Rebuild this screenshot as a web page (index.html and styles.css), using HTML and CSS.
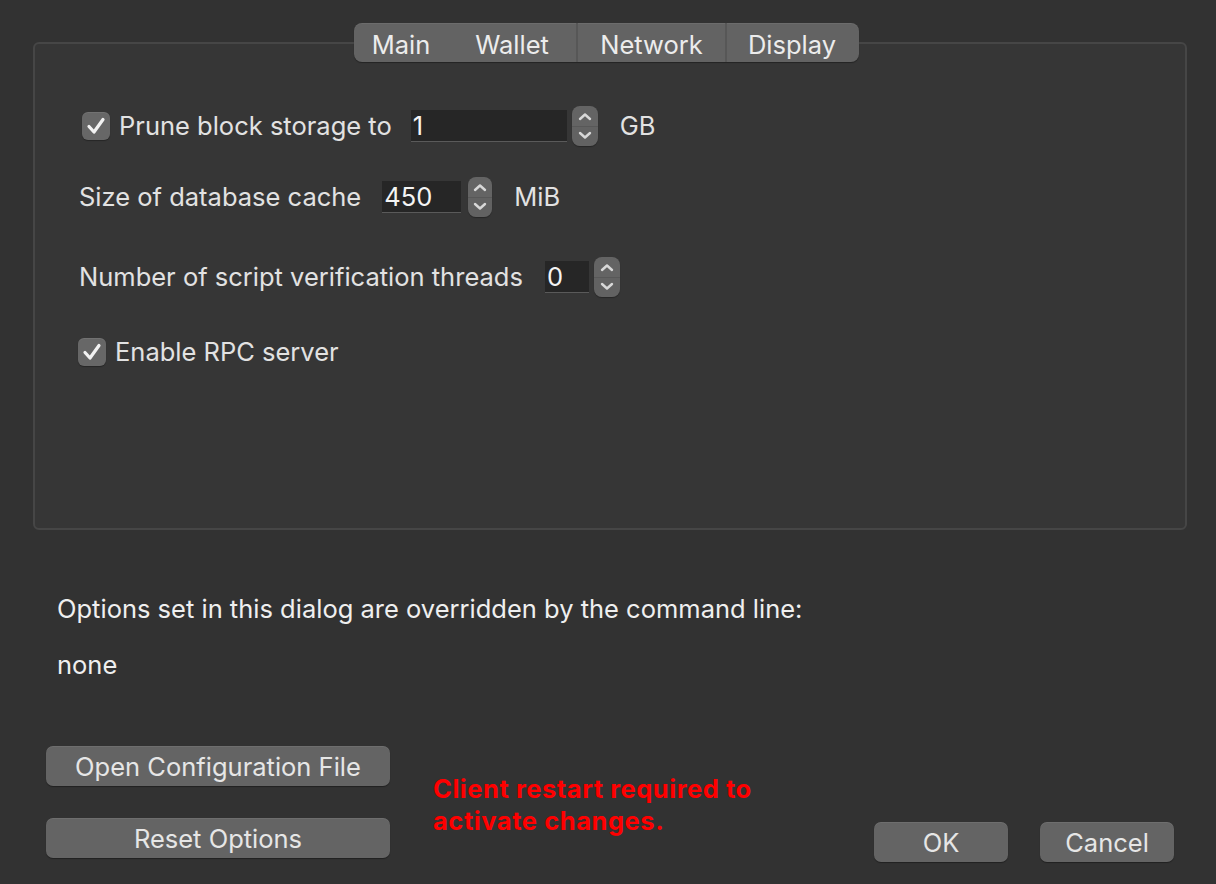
FILE: index.html
```html
<!DOCTYPE html>
<html>
<head>
<meta charset="utf-8">
<link rel="stylesheet" href="styles.css">
</head>
<body>
<div class="dialog">
  <div class="tabbar">
    <div class="tabs">
      <div class="tab tab-main">Main</div>
      <div class="tab tab-wallet">Wallet</div>
      <div class="tab tab-sep">Network</div>
      <div class="tab tab-sep tab-display">Display</div>
    </div>
  </div>
  <div class="panel">
    <div class="row row1">
      <span class="checkbox"><svg viewBox="0 0 28 28" width="28" height="28"><path d="M7 14.5 L12 20 L21 7.5" fill="none" stroke="#f2f2f2" stroke-width="3.2" stroke-linecap="round" stroke-linejoin="round"/></svg></span>
      <span class="label cb-label">Prune block storage to</span>
      <span class="spin spin-prune"><span class="field w156">1</span><span class="stepper"><svg viewBox="0 0 26 40" width="26" height="40"><path d="M8 13 L13 8.5 L18 13" fill="none" stroke="#d8d8d8" stroke-width="2.4" stroke-linecap="round" stroke-linejoin="round"/><path d="M8 27 L13 31.5 L18 27" fill="none" stroke="#d8d8d8" stroke-width="2.4" stroke-linecap="round" stroke-linejoin="round"/></svg></span></span>
      <span class="label unit">GB</span>
    </div>
    <div class="row row2">
      <span class="label">Size of database cache</span>
      <span class="spin spin-cache"><span class="field w79">450</span><span class="stepper small"><svg viewBox="0 0 24 40" width="24" height="40"><path d="M7 13 L12 8.5 L17 13" fill="none" stroke="#d8d8d8" stroke-width="2.4" stroke-linecap="round" stroke-linejoin="round"/><path d="M7 27 L12 31.5 L17 27" fill="none" stroke="#d8d8d8" stroke-width="2.4" stroke-linecap="round" stroke-linejoin="round"/></svg></span></span>
      <span class="label unit">MiB</span>
    </div>
    <div class="row row3">
      <span class="label">Number of script verification threads</span>
      <span class="spin spin-threads"><span class="field w44">0</span><span class="stepper"><svg viewBox="0 0 26 40" width="26" height="40"><path d="M8 13 L13 8.5 L18 13" fill="none" stroke="#d8d8d8" stroke-width="2.4" stroke-linecap="round" stroke-linejoin="round"/><path d="M8 27 L13 31.5 L18 27" fill="none" stroke="#d8d8d8" stroke-width="2.4" stroke-linecap="round" stroke-linejoin="round"/></svg></span></span>
    </div>
    <div class="row row4">
      <span class="checkbox"><svg viewBox="0 0 28 28" width="28" height="28"><path d="M7 14.5 L12 20 L21 7.5" fill="none" stroke="#f2f2f2" stroke-width="3.2" stroke-linecap="round" stroke-linejoin="round"/></svg></span>
      <span class="label cb-label">Enable RPC server</span>
    </div>
  </div>
  <div class="info">
    <p class="info-line">Options set in this dialog are overridden by the command line:</p>
    <p class="info-line none">none</p>
  </div>
  <div class="footer">
    <div class="left-buttons">
      <button class="btn wide">Open Configuration File</button>
      <button class="btn wide">Reset Options</button>
    </div>
    <div class="warning">Client restart required to<br>activate changes.</div>
    <div class="right-buttons">
      <button class="btn narrow">OK</button>
      <button class="btn narrow">Cancel</button>
    </div>
  </div>
</div>
</body>
</html>
```

FILE: styles.css
```css
html, body {
  margin: 0;
  padding: 0;
  background: #323232;
  height: 884px;
  overflow: hidden;
}
body {
  font-family: Inter, "Noto Sans", "Liberation Sans", sans-serif;
  font-size: 25.5px;
  color: #e2e2e2;
}
.dialog {
  padding: 23px 29px 0 33px;
}
.tabbar {
  display: flex;
  justify-content: center;
  position: relative;
  z-index: 1;
  padding-right: 7px;
}
.tabs {
  display: flex;
  height: 39px;
  width: 505px;
  background: #636363;
  border-radius: 8px;
  box-shadow: 0 1px 1px rgba(0,0,0,0.35), inset 0 1px 0 rgba(255,255,255,0.06);
  overflow: hidden;
}
.tab {
  display: flex;
  align-items: center;
  justify-content: center;
  height: 39px;
  padding-top: 3px;
  box-sizing: border-box;
  color: #ececec;
  font-size: 25.5px;
}
.tab-main { width: 94px; }
.tab-wallet { width: 128px; }
.tab-sep { border-left: 2px solid #575757; width: 149px; }
.tab-display { width: 132px; }
.panel {
  margin-top: -20px;
  height: 488px;
  border: 2px solid #464646;
  border-radius: 6px;
  background: #363636;
  padding: 62px 0 0 42px;
  box-sizing: border-box;
}
.row {
  display: flex;
  align-items: center;
  height: 40px;
}
.row1 { margin-left: 5px; }
.row2 { margin-top: 31px; margin-left: 2px; }
.row3 { margin-top: 40px; margin-left: 2px; }
.row4 { margin-top: 35px; margin-left: 1px; }
.checkbox {
  width: 28px;
  height: 28px;
  border-radius: 6px;
  background: #676767;
  box-shadow: inset 0 1px 0 rgba(255,255,255,0.08), 0 1px 1px rgba(0,0,0,0.3);
  display: inline-flex;
}
.cb-label { margin-left: 9px; }
.label { white-space: nowrap; line-height: 32px; }
.spin {
  display: inline-flex;
  align-items: center;
  margin-left: 19px;
}
.spin-cache { margin-left: 21px; }
.spin-threads { margin-left: 22px; }
.field {
  height: 32px;
  background: #262626;
  border-bottom: 1px solid #5a5a5a;
  box-sizing: border-box;
  color: #f4f4f4;
  padding-left: 2px;
  line-height: 32px;
  font-size: 25.5px;
}
.w156 { width: 156px; }
.w79 { width: 79px; }
.w44 { width: 44px; }
.stepper {
  margin-left: 5px;
  width: 26px;
  height: 40px;
  border-radius: 8px;
  background: linear-gradient(#646464 0 49%, #585858 49% 52%, #626262 52%);
  display: inline-flex;
  box-shadow: 0 1px 1px rgba(0,0,0,0.3);
}
.stepper.small { width: 24px; margin-left: 7px; }
.unit { margin-left: 22px; }
.info {
  padding-left: 24px;
  margin-top: 63px;
}
.info-line {
  margin: 0;
  line-height: 32px;
  color: #efefef;
}
.none { margin-top: 24px; }
.footer {
  display: flex;
  align-items: flex-start;
  margin-top: 65px;
  padding-left: 13px;
  padding-right: 13px;
}
.left-buttons {
  display: flex;
  flex-direction: column;
  gap: 32px;
}
.btn {
  font-family: Inter, "Noto Sans", "Liberation Sans", sans-serif;
  font-size: 25.5px;
  color: #e6e6e6;
  background: #646464;
  border: none;
  border-radius: 7px;
  height: 40px;
  padding: 0;
  box-shadow: 0 1px 1px rgba(0,0,0,0.35), inset 0 1px 0 rgba(255,255,255,0.07);
}
.wide { width: 344px; }
.narrow { width: 134px; }
.warning {
  margin-left: 43px;
  margin-top: 27px;
  color: #ff0000;
  font-weight: 700;
  line-height: 32px;
  font-size: 25.5px;
  letter-spacing: 0.55px;
}
.right-buttons {
  margin-left: auto;
  margin-top: 76px;
  display: flex;
  gap: 32px;
}
```
